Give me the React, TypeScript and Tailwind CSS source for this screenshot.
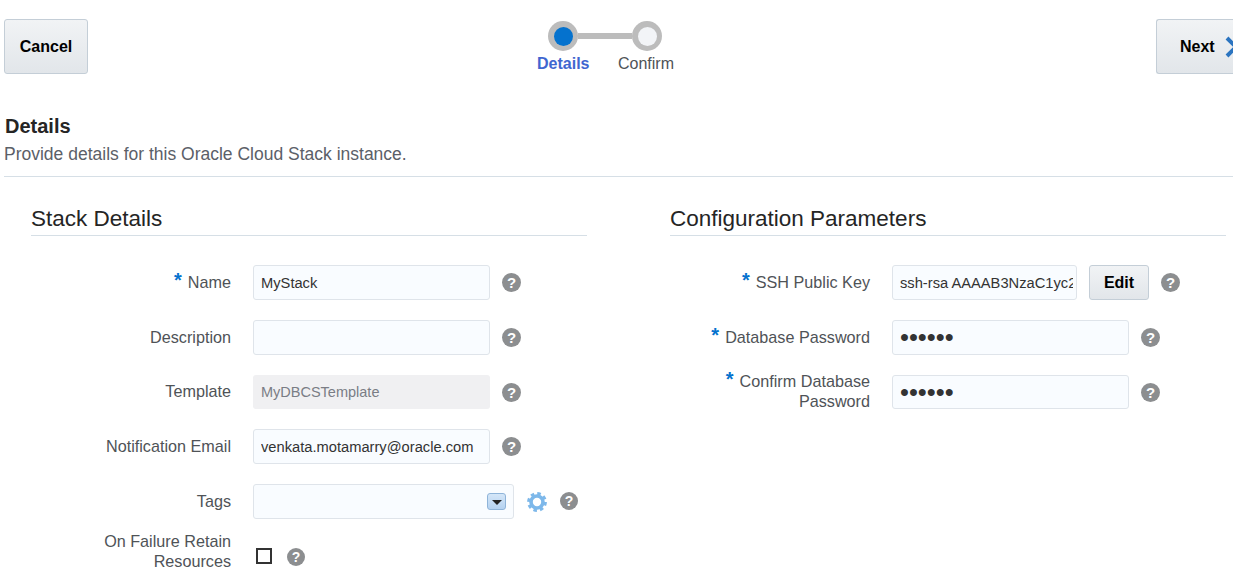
import { FC, ReactNode } from "react";

const HelpIcon: FC<{ small?: boolean }> = ({ small }) => (
  <span
    className={
      small
        ? "flex h-[18px] w-[18px] shrink-0 items-center justify-center rounded-full bg-[#8c8e90] text-[14px] font-bold leading-none text-white"
        : "flex h-[19px] w-[19px] shrink-0 items-center justify-center rounded-full bg-[#8c8e90] text-[15px] font-bold leading-none text-white"
    }
  >
    ?
  </span>
);

const GearIcon: FC = () => (
  <svg width="22" height="22" viewBox="0 0 22 22" className="shrink-0">
    <circle cx="11" cy="11" r="8.2" fill="none" stroke="#7db8ea" strokeWidth="3.4" strokeDasharray="3.4 3.04" />
    <circle cx="11" cy="11" r="6" fill="none" stroke="#7db8ea" strokeWidth="3.6" />
    <circle cx="11" cy="11" r="2.4" fill="#ffffff" />
  </svg>
);

const inputClass =
  "rounded-[3px] border border-[#dfe4ea] bg-[#f9fcff] pl-[7px] text-[14.7px] text-[#333333] outline-none";

type RowProps = {
  label: ReactNode;
  required?: boolean;
  short?: boolean;
  children: ReactNode;
};

const Row: FC<RowProps> = ({ label, required, short, children }) => (
  <div className={short ? "flex h-[34px] items-center" : "flex h-[35px] items-center"}>
    <label className="w-[200px] shrink-0 pb-[2px] text-right text-[16.2px] leading-[20px] text-[#4f5357]">
      {required && <span className="mr-[6px] align-[1px] text-[20px] font-bold leading-[0] text-[#0572ce]">*</span>}
      {label}
    </label>
    <div className="ml-[22px] flex items-center">{children}</div>
  </div>
);

const Field: FC<{ value?: string; type?: string; disabled?: boolean; short?: boolean }> = ({
  value = "",
  type = "text",
  disabled,
  short,
}) => {
  let cls = `${inputClass} h-[35px] w-[237px] pr-[7px]`;
  if (disabled) {
    cls = "h-[34px] w-[237px] rounded-[3px] bg-[#f0f0f2] px-[8px] text-[14.5px] text-[#7a7d85] outline-none";
  } else if (type === "password") {
    cls = `rounded-[3px] border border-[#dfe4ea] bg-[#f9fcff] px-[7px] text-[25.5px] text-[#333333] outline-none w-[237px] ${
      short ? "h-[34px]" : "h-[35px]"
    }`;
  }
  return (
    <>
      <input className={cls} type={type} value={value} disabled={disabled} readOnly />
      <span className="ml-[12px]">
        <HelpIcon />
      </span>
    </>
  );
};

const App: FC = () => {
  return (
    <main className="h-[581px] w-[1233px] overflow-hidden bg-white font-['Liberation_Sans',Arial,sans-serif]">
      <div className="flex items-start justify-between pl-1 pt-[19px]">
        <button className="h-[55px] w-[84px] rounded-[3px] border border-[#c4ced7] bg-gradient-to-b from-[#f1f3f5] to-[#e2e6ea] text-[16px] font-bold text-black">
          Cancel
        </button>
        <div className="mr-[34px] mt-[2px] flex w-[140px] flex-col items-center">
          <div className="flex items-center">
            <span className="flex h-[30px] w-[30px] items-center justify-center rounded-full bg-[#bcbcbc]">
              <span className="h-[19px] w-[19px] rounded-full bg-[#0572ce]" />
            </span>
            <span className="h-[6px] w-[54px] bg-[#bcbcbc]" />
            <span className="flex h-[30px] w-[30px] items-center justify-center rounded-full bg-[#bcbcbc]">
              <span className="h-[19px] w-[19px] rounded-full bg-[#f2f4f7]" />
            </span>
          </div>
          <div className="ml-[1px] mt-[3px] flex w-[137px] justify-between text-[16px] leading-[20px]">
            <span className="font-bold text-[#3f66d0]">Details</span>
            <span className="text-[#4f5357]">Confirm</span>
          </div>
        </div>
        <button className="flex h-[55px] w-[77px] items-center overflow-hidden rounded-l-[3px] border border-r-0 border-[#c4ced7] bg-gradient-to-b from-[#f1f3f5] to-[#e2e6ea] pl-[23px] text-[16px] font-bold text-black">
          Next
          <svg width="16" height="22" viewBox="0 0 16 22" className="ml-[10px] shrink-0">
            <path d="M2 2 L11 11 L2 20" fill="none" stroke="#2b74c0" strokeWidth="4" />
          </svg>
        </button>
      </div>

      <div className="ml-1 mt-[40px] border-b border-[#d6dfe6] pb-[11px]">
        <h1 className="pl-px text-[20px] font-bold leading-[24px] text-[#252525]">Details</h1>
        <p className="mt-[6px] text-[17.5px] leading-[21px] text-[#5b6068]">
          Provide details for this Oracle Cloud Stack instance.
        </p>
      </div>

      <div className="mt-[25px] flex pl-[31px]">
        <section className="w-[556px]">
          <h2 className="border-b border-[#d6dfe6] pb-[2px] pt-[2px] text-[22.5px] leading-[29px] text-[#252525]">
            Stack Details
          </h2>
          <div className="mt-[29px] flex flex-col gap-[20px]">
            <Row label="Name" required>
              <Field value="MyStack" />
            </Row>
            <Row label="Description">
              <Field />
            </Row>
            <Row label="Template" short>
              <Field value="MyDBCSTemplate" disabled />
            </Row>
            <Row label="Notification Email">
              <Field value="venkata.motamarry@oracle.com" />
            </Row>
            <Row label="Tags">
              <div className={`${inputClass} flex h-[35px] w-[261px] items-center justify-end pr-[7px]`}>
                <span className="flex h-[17px] w-[19px] items-center justify-center rounded-[3px] border border-[#8fb4d9] bg-gradient-to-b from-[#d4e6f8] to-[#b5d2f0]">
                  <span className="mt-px h-0 w-0 border-x-[5px] border-t-[5px] border-x-transparent border-t-[#222222]" />
                </span>
              </div>
              <span className="ml-[12px]">
                <GearIcon />
              </span>
              <span className="ml-[12px] -mt-[1px]">
                <HelpIcon small />
              </span>
            </Row>
            <div className="-mt-[5px]">
              <Row label={<>On Failure Retain Resources</>}>
                <div className="mt-[8px] flex items-center">
                  <span className="ml-[3px] h-[16px] w-[16px] border-2 border-[#333333]" />
                  <span className="ml-[15px] mt-[3px]">
                    <HelpIcon small />
                  </span>
                </div>
              </Row>
            </div>
          </div>
        </section>

        <section className="ml-[83px] w-[556px]">
          <h2 className="border-b border-[#d6dfe6] pb-[2px] pt-[2px] text-[22.5px] leading-[29px] text-[#252525]">
            Configuration Parameters
          </h2>
          <div className="mt-[29px] flex flex-col gap-[20px]">
            <Row label="SSH Public Key" required>
              <input
                className={`${inputClass} h-[35px] w-[185px] pr-[3px]`}
                type="text"
                value="ssh-rsa AAAAB3NzaC1yc2EAAAADAQABAAAB"
                readOnly
              />
              <button className="ml-[12px] h-[35px] w-[60px] rounded-[3px] border border-[#c4ced7] bg-gradient-to-b from-[#f1f3f5] to-[#e2e6ea] text-[16px] font-bold text-black">
                Edit
              </button>
              <span className="ml-[12px]">
                <HelpIcon />
              </span>
            </Row>
            <Row label="Database Password" required>
              <Field value="secret" type="password" />
            </Row>
            <Row label="Confirm Database Password" required short>
              <Field value="secret" type="password" short />
            </Row>
          </div>
        </section>
      </div>
    </main>
  );
};

export default App;
